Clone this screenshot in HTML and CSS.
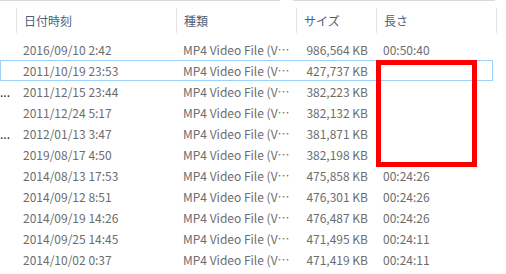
FILE: index.html
```html
<!DOCTYPE html>
<html lang="ja">
<head>
<meta charset="utf-8">
<title>Details view</title>
<link rel="stylesheet" href="styles.css">
</head>
<body>
<div class="view">
  <div class="topbar"><span class="seg seg-a"></span><span class="seg seg-b"></span></div>
  <div class="grid header">
    <div class="hcell"></div>
    <div class="hcell"><span class="hlabel">日付時刻</span></div>
    <div class="hcell"><span class="hlabel">種類</span></div>
    <div class="hcell"><span class="hlabel">サイズ</span></div>
    <div class="hcell"><span class="hlabel">長さ</span></div>
    <div class="hcell"><span class="hlabel"></span></div>
  </div>
  <div class="rows">
    <div class="grid row"><span class="name"></span><span class="date">2016/09/10 2:42</span><span class="type">MP4 Video File (VLC)</span><span class="size">986,564 KB</span><span class="len">00:50:40</span></div>
    <div class="grid row focused"><span class="name"></span><span class="date">2011/10/19 23:53</span><span class="type">MP4 Video File (VLC)</span><span class="size">427,737 KB</span><span class="len"></span></div>
    <div class="grid row"><span class="name">...</span><span class="date">2011/12/15 23:44</span><span class="type">MP4 Video File (VLC)</span><span class="size">382,223 KB</span><span class="len"></span></div>
    <div class="grid row"><span class="name"></span><span class="date">2011/12/24 5:17</span><span class="type">MP4 Video File (VLC)</span><span class="size">382,132 KB</span><span class="len"></span></div>
    <div class="grid row"><span class="name">...</span><span class="date">2012/01/13 3:47</span><span class="type">MP4 Video File (VLC)</span><span class="size">381,871 KB</span><span class="len"></span></div>
    <div class="grid row"><span class="name"></span><span class="date">2019/08/17 4:50</span><span class="type">MP4 Video File (VLC)</span><span class="size">382,198 KB</span><span class="len"></span></div>
    <div class="grid row"><span class="name"></span><span class="date">2014/08/13 17:53</span><span class="type">MP4 Video File (VLC)</span><span class="size">475,858 KB</span><span class="len">00:24:26</span></div>
    <div class="grid row"><span class="name"></span><span class="date">2014/09/12 8:51</span><span class="type">MP4 Video File (VLC)</span><span class="size">476,301 KB</span><span class="len">00:24:26</span></div>
    <div class="grid row"><span class="name"></span><span class="date">2014/09/19 14:26</span><span class="type">MP4 Video File (VLC)</span><span class="size">476,487 KB</span><span class="len">00:24:26</span></div>
    <div class="grid row"><span class="name"></span><span class="date">2014/09/25 14:45</span><span class="type">MP4 Video File (VLC)</span><span class="size">471,495 KB</span><span class="len">00:24:11</span></div>
    <div class="grid row"><span class="name"></span><span class="date">2014/10/02 0:37</span><span class="type">MP4 Video File (VLC)</span><span class="size">471,419 KB</span><span class="len">00:24:11</span></div>
  </div>
  <div class="mark"></div>
</div>
</body>
</html>
```

FILE: styles.css
```css
html, body {
  margin: 0;
  padding: 0;
  background: #ffffff;
}
body {
  font-family: "Noto Sans CJK JP", "Noto Sans", sans-serif;
  font-size: 12px;
  color: #6d6d6d;
}
.view {
  position: relative;
  width: 506px;
  height: 274px;
  overflow: hidden;
}
.topbar {
  display: flex;
  height: 1px;
}
.seg {
  display: block;
  height: 1px;
  background: #d9d9d9;
}
.seg-a { width: 280px; }
.seg-b { width: 202px; margin-left: 13px; }
.grid {
  display: grid;
  grid-template-columns: 16px 160px 120px 80px 120px 10px;
}
.header {
  height: 38px;
}
.hcell {
  padding-top: 7px;
}
.hlabel {
  display: block;
  height: 25px;
  line-height: 25px;
  border-left: 1px solid #e5e5e5;
  padding-left: 7px;
  color: #4c607a;
  white-space: nowrap;
}
.row {
  height: 21px;
  line-height: 21px;
  white-space: nowrap;
}
.row > span {
  overflow: hidden;
}
.name {
  text-align: right;
  padding-right: 8px;
  color: #1e1e1e;
}
.date {
  padding-left: 7px;
}
.type {
  padding-left: 7px;
  padding-right: 6px;
  text-overflow: ellipsis;
}
.size {
  text-align: right;
  padding-right: 8px;
}
.len {
  padding-left: 7px;
}
.focused {
  position: relative;
}
.focused::after {
  content: "";
  position: absolute;
  left: 0;
  top: 0;
  width: 493px;
  height: 21px;
  box-sizing: border-box;
  border: 1px solid #99d1ff;
}
.mark {
  position: absolute;
  left: 376px;
  top: 60px;
  width: 101px;
  height: 107px;
  box-sizing: border-box;
  border: 5px solid #ff0000;
}
```
